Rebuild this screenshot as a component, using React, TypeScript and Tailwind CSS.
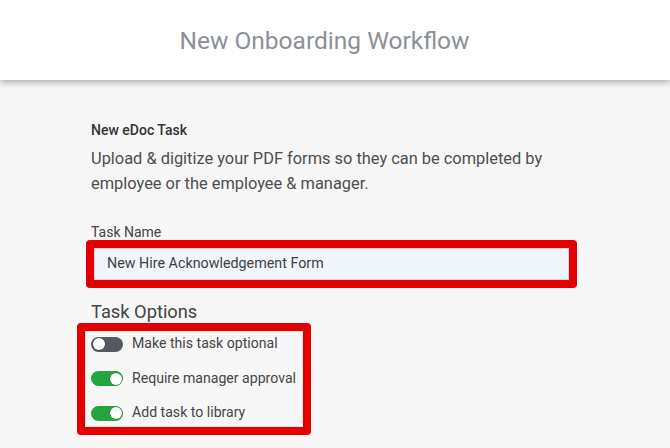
const options = [
  { label: 'Make this task optional', on: false },
  { label: 'Require manager approval', on: true },
  { label: 'Add task to library', on: true },
];

const Toggle = ({ on }: { on: boolean }) => (
  <span
    className={`relative inline-flex h-[15px] w-8 shrink-0 items-center rounded-full ${
      on ? 'bg-[#25a53e] justify-end' : 'bg-[#56595f] justify-start'
    } px-[1.5px]`}
  >
    <span className="h-3 w-3 rounded-full bg-white shadow-[0_0_0_0.5px_rgba(0,0,0,0.3)]" />
  </span>
);

const App = () => {
  return (
    <div className="min-h-[448px] bg-[#f7f7f7] font-['Roboto',_'Liberation_Sans',_sans-serif]">
      <header className="relative z-10 flex h-20 items-center justify-center bg-white pr-[21px] pt-[3px] shadow-[0_2px_7px_rgba(0,0,0,0.35)]">
        <h1 className="text-[24.5px] font-normal text-[#8c9197]">New Onboarding Workflow</h1>
      </header>

      <main className="pl-[91px] pr-[93px] pt-[41px]">
        <p className="text-[14px] font-medium leading-[18px] text-[#333]">New eDoc Task</p>
        <p className="mt-[7px] text-[16.4px] leading-[25px] text-[#4e4e4e]">
          Upload &amp; digitize your PDF forms so they can be completed by employee or the employee &amp; manager.
        </p>

        <p className="mt-[28px] text-[14px] leading-4 text-[#444]">Task Name</p>
        <div className="-ml-[5px] w-[491px] rounded-[4px] border-8 border-[#e20000]">
          <div className="flex h-8 items-center border border-[#d3d7dd] bg-[#f1f6fd] pl-3 text-[14.3px] text-[#3f3f3f]">
            New Hire Acknowledgement Form
          </div>
        </div>

        <h2 className="mt-3 text-[18.3px] leading-[23px] text-[#444]">Task Options</h2>
        <div className="-ml-[14px] w-[234px] rounded-[4px] border-8 border-[#e20000]">
          <div className="flex h-24 flex-col gap-[16.5px] border border-[#e2e2e2] pl-[5px] pt-[3px]">
            {options.map((o) => (
              <div key={o.label} className="flex h-[18px] items-center gap-[9px]">
                <Toggle on={o.on} />
                <span className="text-[14.1px] text-[#454545]">{o.label}</span>
              </div>
            ))}
          </div>
        </div>
      </main>
    </div>
  );
};

export default App;
